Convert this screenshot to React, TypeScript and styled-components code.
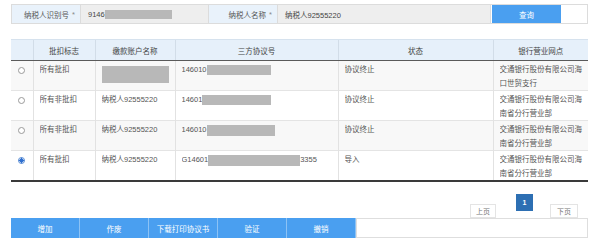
import React from "react";
import styled, { createGlobalStyle } from "styled-components";

const Global = createGlobalStyle`
  html, body { margin: 0; padding: 0; background: #fff; }
  body { font-family: "Liberation Sans", "Noto Sans CJK SC", sans-serif; color: #555; }
`;

const Page = styled.div`
  width: 577px;
  padding: 4px 0 0 11px;
`;

const SearchBar = styled.div`
  display: grid;
  grid-template-columns: 69px 128px 69px 213px 70px 28px;
  height: 20px;
  border: 1px solid #dcdcdc;
  box-sizing: border-box;
  width: 577px;
`;

const Label = styled.div`
  background: #e9f2fb;
  display: flex;
  align-items: center;
  justify-content: flex-end;
  padding-right: 5px;
  font-size: 7.5px;
  color: #555;
  border-right: 1px solid #dcdcdc;
`;

const Star = styled.span`
  color: #888;
  margin-left: 3px;
`;

const Input = styled.div`
  background: #eeeeee;
  display: flex;
  align-items: center;
  padding-left: 7px;
  font-size: 7.5px;
  color: #444;
  border-right: 1px solid #dcdcdc;
`;

const Redact = styled.span<{ $w: number; $h: number }>`
  display: inline-block;
  width: ${(p) => p.$w}px;
  height: ${(p) => p.$h}px;
  background: #b8b8b8;
  vertical-align: middle;
`;

const QueryWrap = styled.div`
  display: flex;
  align-items: stretch;
  padding: 0 0 0 1px;
`;

const QueryButton = styled.div`
  flex: 1;
  background: #4a9ff0;
  color: #fff;
  font-size: 7.5px;
  display: flex;
  align-items: center;
  justify-content: center;
`;

const Table = styled.table`
  margin-top: 15px;
  width: 577px;
  border-collapse: collapse;
  table-layout: fixed;
  font-size: 7.5px;
  border-bottom: 2px solid #3a3a3a;
`;

const Th = styled.th`
  background: #e6f0fa;
  height: 20px;
  font-weight: normal;
  color: #444;
  border-top: 1px solid #d6e2ee;
  border-left: 1px solid #d2dde8;
  border-bottom: 1px solid #5a5a5a;
  padding: 0;
  &:first-child { border-left: none; }
`;

const Tr = styled.tr<{ $shade?: boolean }>`
  background: ${(p) => (p.$shade ? "#f8f8f8" : "#fff")};
`;

const Td = styled.td<{ $center?: boolean }>`
  vertical-align: top;
  padding: 2px 0 0 6px;
  line-height: 13.5px;
  border-left: 1px solid #e2e2e2;
  border-top: 1px solid #e4e4e4;
  text-align: ${(p) => (p.$center ? "center" : "left")};
  color: #555;
  &:first-child { border-left: none; padding-left: 0; }
`;

const Cell = styled.div`
  height: 27px;
  overflow: hidden;
`;

const Radio = styled.span<{ $on?: boolean }>`
  display: inline-block;
  width: 7px;
  height: 7px;
  margin-top: 4px;
  border-radius: 50%;
  border: 1px solid ${(p) => (p.$on ? "#5b8fd6" : "#9a9a9a")};
  background: ${(p) =>
    p.$on ? "radial-gradient(circle, #2f6fcf 0 2px, #fff 2.3px)" : "#fff"};
  box-sizing: border-box;
`;

const PagerRow = styled.div`
  margin-top: 12px;
  height: 25px;
  display: flex;
  justify-content: flex-end;
  align-items: flex-end;
  padding-right: 10px;
  width: 577px;
  box-sizing: border-box;
`;

const PageBtn = styled.div<{ $w: number }>`
  width: ${(p) => p.$w}px;
  height: 14px;
  background: #fff;
  border: 1px solid #e4e4e4;
  box-sizing: border-box;
  font-size: 7px;
  color: #777;
  display: flex;
  align-items: center;
  justify-content: center;
  position: relative;
  z-index: 1;
  margin-bottom: 1px;
`;

const PageNum = styled.div`
  align-self: flex-start;
  width: 17px;
  height: 17px;
  background: #2d6fb3;
  color: #fff;
  font-size: 7px;
  font-weight: bold;
  display: flex;
  align-items: center;
  justify-content: center;
  margin: 0 17px 0 20px;
`;

const Toolbar = styled.div`
  display: flex;
  height: 20px;
  width: 577px;
  margin-top: -1px;
`;

const ToolButton = styled.div`
  width: 69px;
  background: #4a9ff0;
  color: #fff;
  font-size: 7.5px;
  display: flex;
  align-items: center;
  justify-content: center;
  border-right: 1px solid #8cc2f5;
  box-sizing: border-box;
  &:last-of-type { border-right: none; }
`;

const ToolFill = styled.div`
  flex: 1;
  border: 1px solid #dedede;
  box-sizing: border-box;
  background: #fff;
`;

type Row = {
  on?: boolean;
  flag: string;
  name: React.ReactNode;
  proto: React.ReactNode;
  status: string;
  bank: string[];
};

const rows: Row[] = [
  {
    flag: "所有批扣",
    name: <Redact $w={69} $h={17} style={{ marginTop: 3, marginLeft: -2 }} />,
    proto: (
      <>
        146010<Redact $w={64} $h={10} />
      </>
    ),
    status: "协议终止",
    bank: ["交通银行股份有限公司海", "口世贸支行"],
  },
  {
    flag: "所有非批扣",
    name: "纳税人92555220",
    proto: (
      <>
        14601<Redact $w={69} $h={10} />
      </>
    ),
    status: "协议终止",
    bank: ["交通银行股份有限公司海", "南省分行营业部"],
  },
  {
    flag: "所有非批扣",
    name: "纳税人92555220",
    proto: (
      <>
        146010<Redact $w={68} $h={11} />
      </>
    ),
    status: "协议终止",
    bank: ["交通银行股份有限公司海", "南省分行营业部"],
  },
  {
    on: true,
    flag: "所有批扣",
    name: "纳税人92555220",
    proto: (
      <>
        G14601<Redact $w={92} $h={11} />3355
      </>
    ),
    status: "导入",
    bank: ["交通银行股份有限公司海", "南省分行营业部"],
  },
];

export default function App() {
  return (
    <Page>
      <Global />
      <SearchBar>
        <Label>
          纳税人识别号<Star>*</Star>
        </Label>
        <Input>
          9146<Redact $w={67} $h={9} />
        </Input>
        <Label>
          纳税人名称<Star>*</Star>
        </Label>
        <Input>纳税人92555220</Input>
        <QueryWrap>
          <QueryButton>查询</QueryButton>
        </QueryWrap>
        <div />
      </SearchBar>

      <Table>
        <colgroup>
          <col style={{ width: 22 }} />
          <col style={{ width: 62 }} />
          <col style={{ width: 80 }} />
          <col style={{ width: 163 }} />
          <col style={{ width: 155 }} />
          <col style={{ width: 95 }} />
        </colgroup>
        <thead>
          <tr>
            <Th />
            <Th>批扣标志</Th>
            <Th>缴款账户名称</Th>
            <Th>三方协议号</Th>
            <Th>状态</Th>
            <Th>银行营业网点</Th>
          </tr>
        </thead>
        <tbody>
          {rows.map((r, i) => (
            <Tr key={i} $shade={i % 2 === 0}>
              <Td $center>
                <Cell>
                  <Radio $on={r.on} />
                </Cell>
              </Td>
              <Td>
                <Cell>{r.flag}</Cell>
              </Td>
              <Td>
                <Cell>{r.name}</Cell>
              </Td>
              <Td>
                <Cell>{r.proto}</Cell>
              </Td>
              <Td>
                <Cell>{r.status}</Cell>
              </Td>
              <Td>
                <Cell>
                  {r.bank[0]}
                  <br />
                  {r.bank[1]}
                </Cell>
              </Td>
            </Tr>
          ))}
        </tbody>
      </Table>

      <PagerRow>
        <PageBtn $w={26}>上页</PageBtn>
        <PageNum>1</PageNum>
        <PageBtn $w={28}>下页</PageBtn>
      </PagerRow>

      <Toolbar>
        <ToolButton>增加</ToolButton>
        <ToolButton>作废</ToolButton>
        <ToolButton>下载打印协议书</ToolButton>
        <ToolButton>验证</ToolButton>
        <ToolButton>撤销</ToolButton>
        <ToolFill />
      </Toolbar>
    </Page>
  );
}
